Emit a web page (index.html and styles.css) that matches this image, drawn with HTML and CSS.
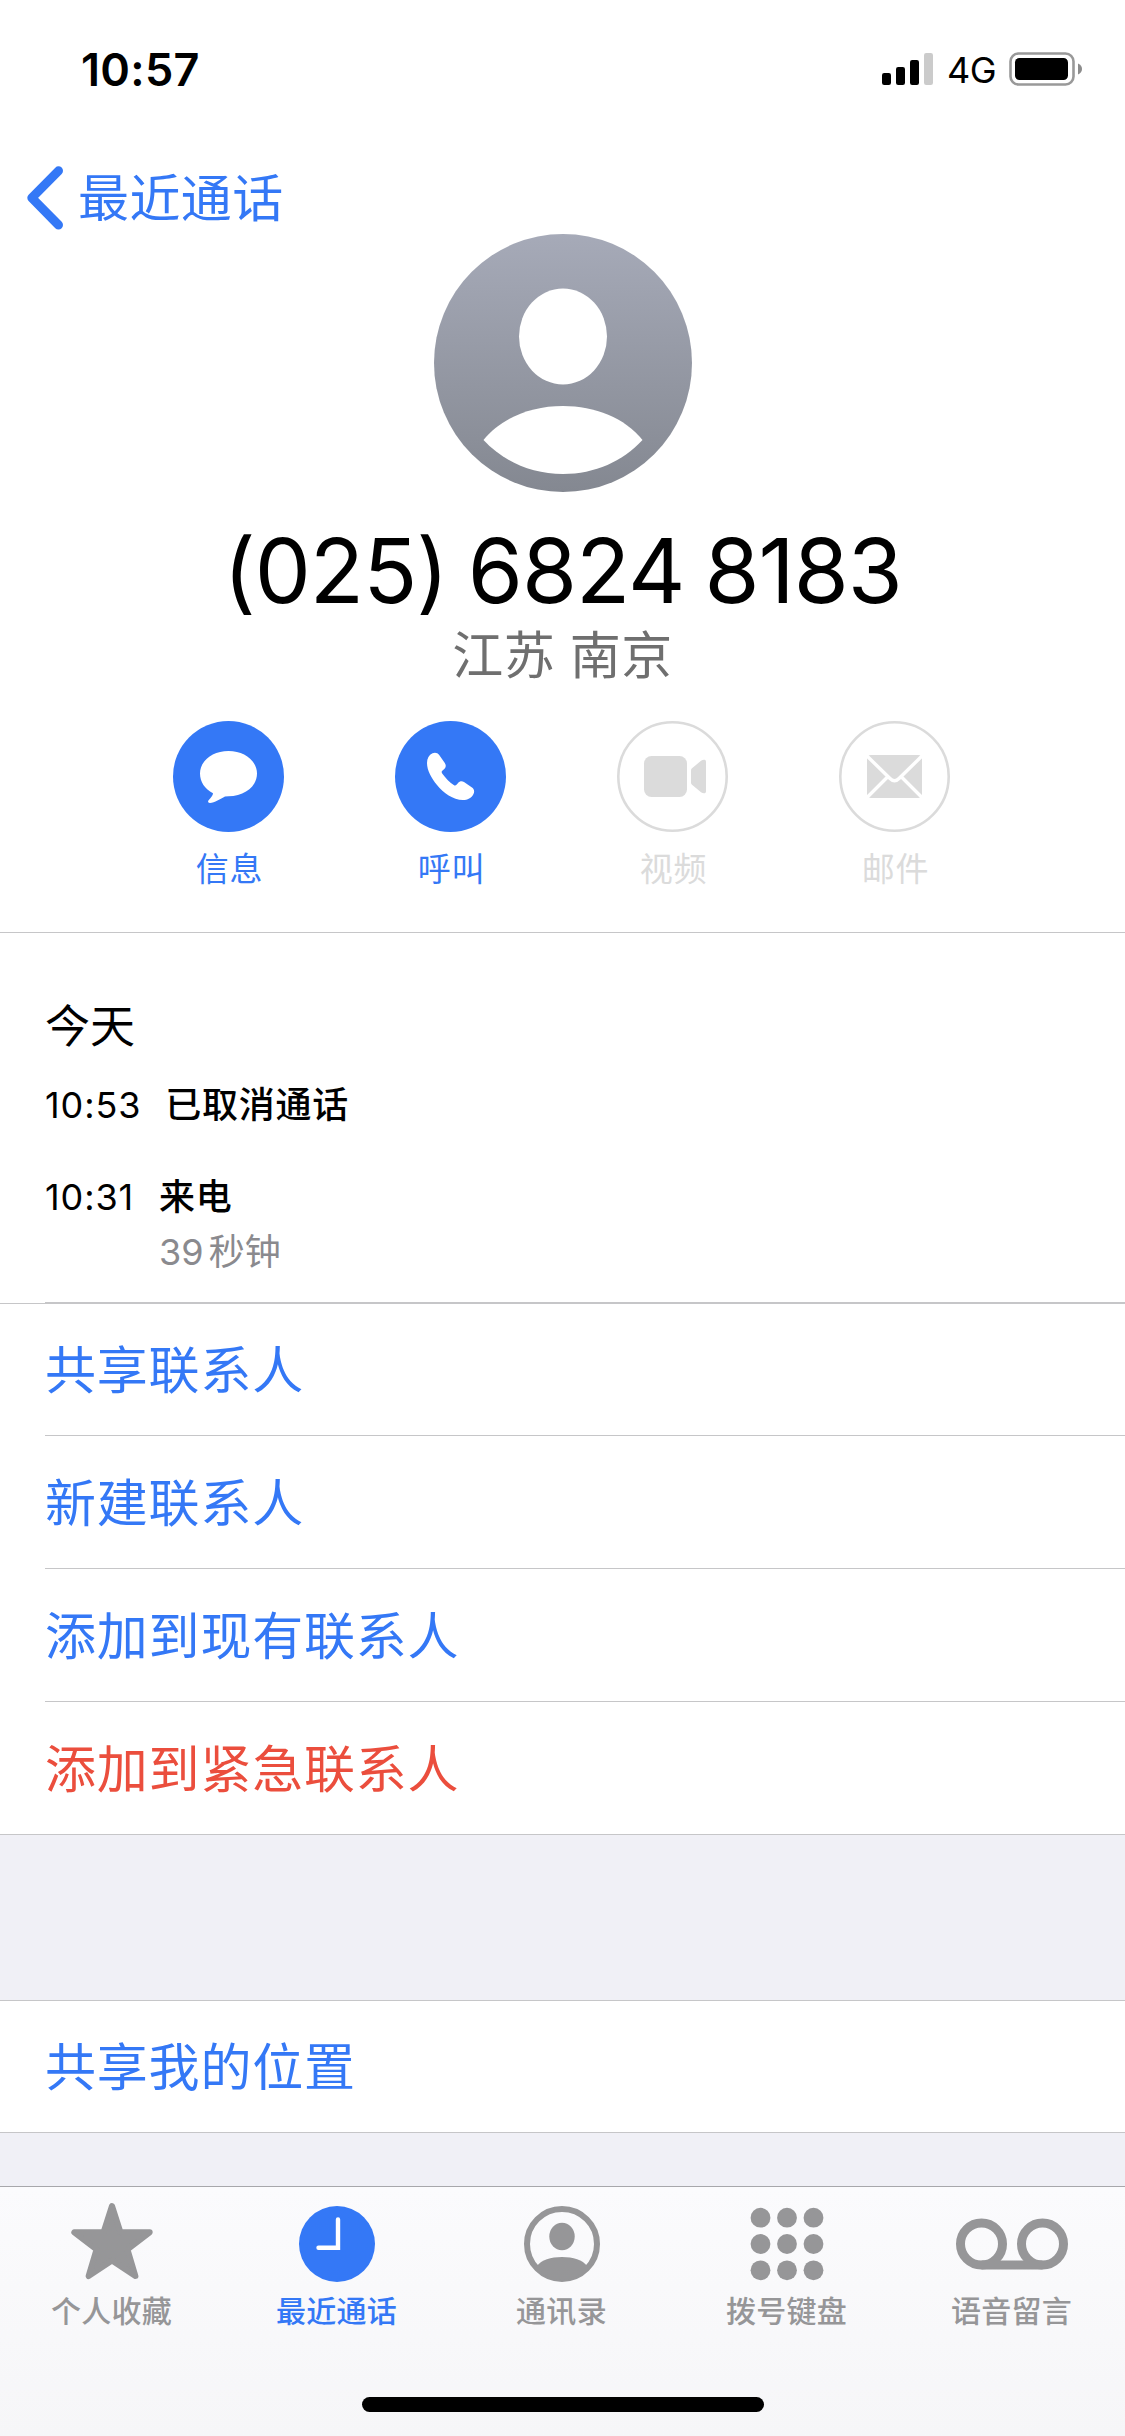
FILE: index.html
```html
<!DOCTYPE html>
<html lang="zh-CN">
<head>
<meta charset="utf-8">
<title>最近通话</title>
<link rel="stylesheet" href="styles.css">
</head>
<body>
<div class="screen">
  <header class="status">
    <span class="clock">10:57</span>
    <div class="indicators">
      <svg class="signal" width="51" height="32" viewBox="0 0 51 32">
        <rect x="0" y="20" width="9" height="12" rx="2.2"/>
        <rect x="14" y="14" width="9" height="18" rx="2.2"/>
        <rect x="28" y="7" width="9" height="25" rx="2.2"/>
        <rect x="42" y="0" width="9" height="32" rx="2.2" fill="#cbcbcb"/>
      </svg>
      <span class="network">4G</span>
      <svg class="battery" width="74" height="34" viewBox="0 0 74 34">
        <rect x="1.5" y="1.5" width="63" height="31" rx="8" fill="none" stroke="#999" stroke-width="2.6"/>
        <rect x="6" y="6" width="53" height="22" rx="4.5"/>
        <path d="M69 11.5c2.6 1 4 3.200 4 5.500s-1.400 4.500-4 5.500z" fill="#8c8c8c"/>
      </svg>
    </div>
  </header>

  <nav class="back">
    <svg width="36" height="64" viewBox="0 0 36 64"><path d="M31.500 4.800 4.800 31.800l26.700 27.200" fill="none" stroke="#3478f6" stroke-width="9" stroke-linecap="round" stroke-linejoin="round"/></svg>
    <span>最近通话</span>
  </nav>

  <section class="contact">
    <svg class="avatar" width="258" height="258" viewBox="0 0 258 258">
      <defs><linearGradient id="g" x1="0" y1="0" x2="0" y2="1"><stop offset="0" stop-color="#a6aab8"/><stop offset="1" stop-color="#848891"/></linearGradient></defs>
      <circle cx="129" cy="129" r="129" fill="url(#g)"/>
      <ellipse cx="129" cy="102.500" rx="44" ry="48" fill="#fff"/>
      <path d="M49.500 206C67 184 97 172 129 172s62 12 79.500 34C189 227 161 240 129 240S69 227 49.500 206z" fill="#fff"/>
    </svg>
    <h1 class="number">(025) 6824 8183</h1>
    <p class="region">江苏 南京</p>
    <div class="actions">
      <div class="action">
        <svg width="111" height="111" viewBox="0 0 111 111"><circle cx="55.500" cy="55.500" r="55.500" fill="#3478f6"/><path d="M55.500 30C71.500 30 84 39.800 84 52.600S71.500 75.200 55.500 75.200L52 75.400C47.500 78 41.500 81.600 37 81.900C34.800 82 34.600 80.300 35.800 79C38 76.700 39.900 74.500 40 72.300C31.800 68 27 61 27 52.600C27 39.800 39.500 30 55.500 30z" fill="#fff"/></svg>
        <span>信息</span>
      </div>
      <div class="action">
        <svg width="111" height="111" viewBox="0 0 111 111"><circle cx="55.500" cy="55.500" r="55.500" fill="#3478f6"/><path d="M37.500 32.300C40 31 42.600 31.800 44.200 34L49.800 42C51.300 44.200 51 46.500 49.300 48L47.300 49.800C46.500 50.600 46.500 51.300 47.200 52.400C50.500 57 54.500 61 58.700 64C59.800 64.800 60.700 64.700 61.500 63.800L63.300 61.700C64.800 59.900 67 59.700 69 61L77 66.500C79.200 68.100 79.700 70.500 78.500 73C76.500 77 72.500 79 68 79C58 79 48.500 72 42 64C36.500 57.300 32 49.500 32 42C32 37.500 34 34 37.500 32.300z" fill="#fff"/></svg>
        <span>呼叫</span>
      </div>
      <div class="action off">
        <svg width="111" height="111" viewBox="0 0 111 111"><circle cx="55.500" cy="55.500" r="54.200" fill="none" stroke="#dbdbdb" stroke-width="2.600"/><rect x="27" y="35" width="43" height="41" rx="7.500"/><path d="M74 49.500C74 48.300 74.300 47.800 75 47.200L84 39.800C86.500 38 89 38.500 89 40.500V70.500C89 72.500 86.500 73 84 71.200L75 63.800C74.300 63.200 74 62.700 74 61.500z"/></svg>
        <span>视频</span>
      </div>
      <div class="action off">
        <svg width="111" height="111" viewBox="0 0 111 111"><circle cx="55.500" cy="55.500" r="54.200" fill="none" stroke="#dbdbdb" stroke-width="2.600"/><rect x="28" y="34" width="55" height="43" rx="4"/><path d="M27 34 51 57.500Q55.500 62 60 57.500L84 34M27 77.500 48.500 56M84 77.500 62.500 56" fill="none" stroke="#fff" stroke-width="3.400"/></svg>
        <span>邮件</span>
      </div>
    </div>
  </section>

  <section class="history">
    <div class="calls">
      <h2>今天</h2>
      <div class="call first"><time>10:53</time><b>已取消通话</b></div>
      <div class="call second"><time>10:31</time><div class="detail"><b>来电</b><small>39<i>秒钟</i></small></div></div>
    </div>
  </section>

  <ul class="list options">
    <li>共享联系人</li>
    <li>新建联系人</li>
    <li>添加到现有联系人</li>
    <li class="danger">添加到紧急联系人</li>
  </ul>
  <ul class="list location">
    <li>共享我的位置</li>
  </ul>

  <footer class="tabbar">
    <div class="tabs">
      <div class="tab">
        <svg width="112" height="80" viewBox="0 0 112 80"><path d="M56 4 64.500 30.300H93.700L71.500 47.500 79.400 74 56 58.500 32.600 74 40.500 47.500 18.300 30.300H47.500z" stroke="#969698" stroke-width="6" stroke-linejoin="round"/></svg>
        <span>个人收藏</span>
      </div>
      <div class="tab active">
        <svg width="112" height="80" viewBox="0 0 112 80"><circle cx="56" cy="42" r="38"/><path d="M57 17.500V45.700H37.500" fill="none" stroke="#fff" stroke-width="4.400" stroke-linecap="round"/></svg>
        <span>最近通话</span>
      </div>
      <div class="tab">
        <svg width="112" height="80" viewBox="0 0 112 80"><circle cx="56" cy="42" r="35" fill="none" stroke="#969698" stroke-width="6"/><ellipse cx="56" cy="34.500" rx="12.700" ry="13.800"/><path d="M31 64C35 58 45 55 56 55S77 58 81 64C75 73 66 78 56 78S37 73 31 64z"/></svg>
        <span>通讯录</span>
      </div>
      <div class="tab">
        <svg width="112" height="80" viewBox="0 0 112 80"><g><circle cx="29.500" cy="15.700" r="9.900"/><circle cx="56" cy="15.700" r="9.900"/><circle cx="82.500" cy="15.700" r="9.900"/><circle cx="29.500" cy="42" r="9.900"/><circle cx="56" cy="42" r="9.900"/><circle cx="82.500" cy="42" r="9.900"/><circle cx="29.500" cy="68.300" r="9.900"/><circle cx="56" cy="68.300" r="9.900"/><circle cx="82.500" cy="68.300" r="9.900"/></g></svg>
        <span>拨号键盘</span>
      </div>
      <div class="tab">
        <svg width="114" height="80" viewBox="0 0 114 80"><g fill="none" stroke="#969698" stroke-width="9"><circle cx="26.500" cy="42" r="21"/><circle cx="87.500" cy="42" r="21"/><path d="M26.500 63H87.500"/></g></svg>
        <span>语音留言</span>
      </div>
    </div>
    <div class="home"></div>
  </footer>
</div>
</body>
</html>
```
FILE: styles.css
```css
* { box-sizing: border-box; margin: 0; padding: 0; }
body {
  width: 1125px;
  background: #f0f0f6;
  color: #000;
  font-family: Inter, "Noto Sans CJK SC", sans-serif;
}
svg { display: block; flex: none; }
.screen {
  width: 1125px;
  height: 2436px;
  display: flex;
  flex-direction: column;
  overflow: hidden;
}
.status {
  height: 132px;
  flex: none;
  display: flex;
  justify-content: space-between;
  padding: 0 42px 0 81px;
  background: #fff;
}
.clock {
  margin-top: 40px;
  height: 60px;
  line-height: 60px;
  font-size: 45px;
  font-weight: 600;
  letter-spacing: 0.3px;
}
.indicators { display: flex; height: 34px; margin-top: 52px; align-items: center; }
.network { margin: 2px 15px 0 14px; width: 47px; line-height: 34px; font-size: 36px; font-weight: 400; letter-spacing: -0.6px; }

.back {
  height: 102px;
  flex: none;
  display: flex;
  align-items: flex-start;
  gap: 15px;
  padding-left: 27px;
  background: #fff;
  color: #3478f6;
  font-size: 51px;
  letter-spacing: 0.4px;
}
.back svg { margin-top: 34px; }
.back span { line-height: 74px; margin-top: 30px; }

.contact {
  height: 699px;
  flex: none;
  display: flex;
  flex-direction: column;
  align-items: center;
  background: #fff;
  border-bottom: 1px solid #c6c6c8;
}
.number {
  height: 110px;
  margin-top: 24px;
  line-height: 110px;
  font-size: 89px;
  font-weight: 400;
  font-feature-settings: "calt" 0;
  letter-spacing: -1px;
  word-spacing: -4px;
  white-space: nowrap;
}
.region {
  height: 74px;
  line-height: 74px;
  margin-top: -7px;
  color: #6f6f6f;
  font-size: 51px;
  letter-spacing: 0.4px;
}
.actions { display: flex; gap: 111px; margin: 28px 2px 0 0; }
.action {
  width: 111px;
  display: flex;
  flex-direction: column;
  align-items: center;
  color: #3478f6;
  fill: #dbdbdb;
  font-size: 33px;
  letter-spacing: 0.8px;
}
.action span { line-height: 48px; margin: 13px 0 0 2px; }
.off { color: #dbdbdb; }

.history { height: 370px; flex: none; padding-left: 45px; background: #fff; }
.calls { height: 370px; padding-top: 61px; border-bottom: 1px solid #c6c6c8; }
.history h2 { height: 66px; line-height: 66px; font-size: 45px; font-weight: 400; }
.call { display: flex; font-size: 36px; line-height: 52px; }
.call b { font-weight: 500; letter-spacing: 0.7px; }
.call time { letter-spacing: 0.9px; }
.first { gap: 24px; margin-top: 19px; }
.second { gap: 25px; margin-top: 40px; }
.detail { display: flex; flex-direction: column; }
.detail small { font-size: 36px; line-height: 52px; margin-top: 3px; color: #8a8a8e; }
.detail i { font-style: normal; margin-left: 5px; letter-spacing: 0; }

.list {
  list-style: none;
  flex: none;
  border-top: 1px solid #c6c6c8;
  border-bottom: 1px solid #c6c6c8;
  padding-left: 45px;
  background: #fff;
}
.list li {
  height: 133px;
  line-height: 135px;
  border-bottom: 1px solid #c6c6c8;
  color: #3478f6;
  font-size: 51px;
  letter-spacing: 0.8px;
}
.list li:first-child { height: 132px; line-height: 134px; }
.list .danger { border-bottom: 0; height: 132px; color: #eb4e3d; }
.location { margin: 165px 0 53px; }
.location li:first-child { height: 131px; border-bottom: 0; }

.tabbar {
  height: 250px;
  flex: none;
  border-top: 1px solid #a7a7ab;
  background: linear-gradient(#fbfbfd, #f6f6f8);
  display: flex;
  flex-direction: column;
  align-items: center;
}
.tabs { display: flex; width: 1125px; height: 210px; padding-top: 15px; }
.tab {
  width: 225px;
  display: flex;
  flex-direction: column;
  align-items: center;
  color: #969698;
  fill: #969698;
  font-size: 30px;
  font-weight: 500;
  letter-spacing: 0.3px;
}
.tab svg { margin-right: 1px; }
.tab span { line-height: 44px; margin: 7px 2px 0 0; }
.active { color: #3478f6; fill: #3478f6; }
.home { width: 402px; height: 15px; border-radius: 8px; background: #000; }
```
